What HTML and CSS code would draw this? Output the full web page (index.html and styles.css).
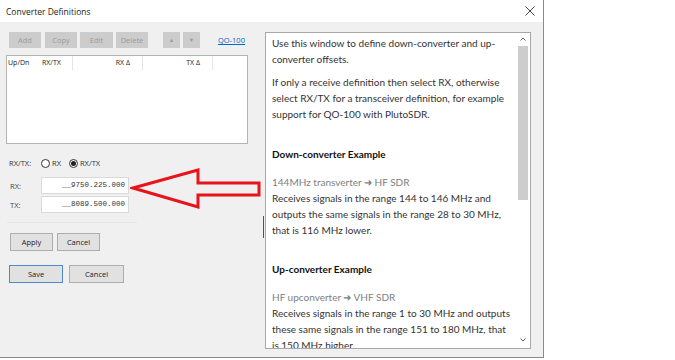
FILE: index.html
```html
<!DOCTYPE html>
<html>
<head>
    <meta charset="utf-8" />
    <title>Converter Definitions</title>
    <link rel="stylesheet" href="styles.css">
</head>
<body>
<div class="window">
    <div class="titlebar">
        <span class="title">Converter Definitions</span>
        <svg class="close" width="10" height="10" viewBox="0 0 10 10"><path d="M0.5 0.5L9.5 9.5M9.5 0.5L0.5 9.5" stroke="#444" stroke-width="1" fill="none"/></svg>
    </div>
    <div class="body">
        <div class="left">
            <div class="toolbar">
                <span class="btn dis w-add">Add</span>
                <span class="btn dis w-copy">Copy</span>
                <span class="btn dis w-edit">Edit</span>
                <span class="btn dis w-del">Delete</span>
                <span class="btn dis w-arr up">&#9650;</span>
                <span class="btn dis w-arr">&#9660;</span>
                <a class="link">QO-100</a>
            </div>
            <div class="list">
                <div class="list-head">
                    <span class="col c1">Up/Dn</span>
                    <span class="col c2">RX/TX</span>
                    <span class="col c3">RX &#916;</span>
                    <span class="col c4">TX &#916;</span>
                </div>
            </div>
            <div class="mode">
                <span class="mode-label">RX/TX:</span>
                <span class="radio"></span><span class="radio-text">RX</span>
                <span class="radio on"></span><span class="radio-text">RX/TX</span>
            </div>
            <div class="freq-row">
                <span class="freq-label">RX:</span>
                <span class="freq">__9750.225.000</span>
            </div>
            <div class="freq-row">
                <span class="freq-label">TX:</span>
                <span class="freq">__8089.500.000</span>
            </div>
            <div class="sep"></div>
            <div class="btn-row">
                <span class="btn w-apply">Apply</span>
                <span class="btn w-apply">Cancel</span>
            </div>
            <div class="btn-row last">
                <span class="btn w-save default">Save</span>
                <span class="btn w-cancel">Cancel</span>
            </div>
        </div>
        <div class="help">
            <div class="help-text">
                <p>Use this window to define down-converter and up-converter offsets.</p>
                <p>If only a receive definition then select RX, otherwise select RX/TX for a transceiver definition, for example support for QO-100 with PlutoSDR.</p>
                <h4>Down-converter Example</h4>
                <div class="sub">144MHz transverter &#10140; HF SDR</div>
                <div>Receives signals in the range 144 to 146 MHz and outputs the same signals in the range 28 to 30 MHz, that is 116 MHz lower.</div>
                <h4>Up-converter Example</h4>
                <div class="sub">HF upconverter &#10140; VHF SDR</div>
                <div>Receives signals in the range 1 to 30 MHz and outputs these same signals in the range 151 to 180 MHz, that is 150 MHz higher.</div>
            </div>
            <div class="scrollbar">
                <svg width="14" height="12" viewBox="0 0 14 12"><path d="M4.5 7.5L7 5L9.5 7.5" stroke="#606060" fill="none"/></svg>
                <div class="thumb"></div>
                <svg class="down" width="14" height="12" viewBox="0 0 14 12"><path d="M4.5 4.5L7 7L9.5 4.5" stroke="#606060" fill="none"/></svg>
            </div>
        </div>
    </div>
</div>
<svg class="arrow" width="140" height="50" viewBox="0 0 140 50">
    <polygon points="3,20 68,2 68,15 129,15 129,27 68,27 68,39" fill="none" stroke="#e8141c" stroke-width="3" stroke-linejoin="miter"/>
</svg>
<div class="redmark"></div>
</body>
</html>
```

FILE: styles.css
```css
body{
    margin: 0px;
    background: #fff;
    font-family: "Open Sans", "Liberation Sans", sans-serif;
}
.window{
    position: relative;
    width: 543px;
    height: 357px;
    background: #f0f0f0;
    border-right: 1px solid #8a8a8a;
    border-bottom: 1px solid #8a8a8a;
    display: flex;
    flex-direction: column;
}
.titlebar{
    flex-shrink: 0;
    height: 22px;
    background: #fff;
    display: flex;
    align-items: center;
    justify-content: space-between;
    padding: 0 8px 0 6px;
}
.title{
    font-size: 8.5px;
    color: #222;
}
.close{
    display: block;
}
.body{
    flex: 1;
    min-height: 0;
    display: flex;
    padding: 10px 12px 8px 0;
}
.left{
    width: 265px;
    flex-shrink: 0;
    display: flex;
    flex-direction: column;
}
.toolbar{
    display: flex;
    align-items: center;
    height: 16px;
    padding-left: 9px;
}
.btn{
    display: flex;
    align-items: center;
    justify-content: center;
    height: 16px;
    background: #e1e1e1;
    border: 1px solid #adadad;
    box-sizing: border-box;
    font-size: 7.5px;
    color: #222;
}
.btn.dis{
    background: #cccccc;
    border-color: #cccccc;
    color: #9a9a9a;
}
.w-add{ width: 32px; margin-right: 4px; }
.w-copy{ width: 32px; margin-right: 3px; }
.w-edit{ width: 33px; margin-right: 3px; }
.w-del{ width: 32px; margin-right: 15px; }
.w-arr{ width: 17px; font-size: 5.5px; margin-right: 3px; }
.link{
    margin-left: 15px;
    font-size: 7.5px;
    color: #0066cc;
    text-decoration: underline;
}
.list{
    margin: 7px 0 0 6px;
    width: 242px;
    height: 89px;
    flex-shrink: 0;
    background: #fff;
    border: 1px solid #b4b4b4;
    box-sizing: border-box;
}
.list-head{
    display: flex;
    height: 14px;
    align-items: center;
    font-size: 7px;
    color: #222;
}
.col{
    height: 14px;
    line-height: 14px;
    box-sizing: border-box;
}
.c1{ width: 35px; padding-left: 1px; }
.c2{ width: 31px; border-right: 1px solid #e5e5e5; }
.c3{ width: 70px; text-align: right; padding-right: 12px; border-right: 1px solid #e5e5e5; }
.c4{ width: 70px; text-align: right; padding-right: 12px; border-right: 1px solid #e5e5e5; }
.mode{
    display: flex;
    align-items: center;
    margin: 13px 0 0 9px;
    height: 12px;
    font-size: 7.5px;
    color: #333;
}
.mode-label{ width: 32px; }
.radio{
    width: 9px;
    height: 9px;
    border: 1px solid #333;
    border-radius: 50%;
    box-sizing: border-box;
    background: #fff;
    display: flex;
    align-items: center;
    justify-content: center;
}
.radio.on::after{
    content: "";
    width: 5px;
    height: 5px;
    border-radius: 50%;
    background: #222;
}
.radio-text{ margin: 0 8px 0 2px; }
.freq-row{
    display: flex;
    align-items: center;
    margin: 8px 0 0 10px;
    height: 17px;
}
.freq-row + .freq-row{ margin-top: 2px; }
.freq-label{
    width: 31px;
    font-size: 7.5px;
    color: #444;
}
.freq{
    width: 88px;
    height: 17px;
    background: #fff;
    border: 1px solid #d9d9d9;
    box-sizing: border-box;
    font-family: "Liberation Mono", monospace;
    font-size: 7.5px;
    color: #333;
    text-align: right;
    padding-right: 3px;
    line-height: 15px;
}
.sep{
    margin: 9px 0 0 7px;
    width: 130px;
    height: 1px;
    background: #e6e6e6;
}
.btn-row{
    display: flex;
    margin: 10px 0 0 10px;
    gap: 4px;
}
.btn-row .btn{ height: 18px; }
.btn-row.last{
    margin: 14px 0 0 9px;
    gap: 6px;
}
.w-apply{ width: 43px; }
.w-save{ width: 54px; }
.w-cancel{ width: 55px; }
.btn.default{
    border: 1px solid #4a8ad0;
}
.help{
    flex: 1;
    min-height: 0;
    display: flex;
    background: #fff;
    border: 1px solid #a8a8a8;
    overflow: hidden;
}
.help-text{
    flex: 1;
    padding: 2px 3px 0 6px;
    font-family: "Lato", "Liberation Sans", sans-serif;
    font-size: 10px;
    line-height: 16px;
    color: #333;
}
.help-text p{
    margin: 0 0 7px 0;
}
.help-text h4{
    margin: 24px 0 12px 0;
    font-size: 10px;
    font-weight: bold;
    color: #111;
}
.help-text h4 + .sub + div + h4{
    margin-top: 23px;
}
.help-text .sub{
    color: #808080;
}
.scrollbar{
    width: 14px;
    flex-shrink: 0;
    display: flex;
    flex-direction: column;
    align-items: center;
    background: #fff;
}
.thumb{
    width: 10px;
    height: 154px;
    margin-top: 1px;
    background: #cdcdcd;
}
.scrollbar .down{
    margin-top: auto;
    margin-bottom: 2px;
}
.arrow{
    position: absolute;
    left: 130px;
    top: 168px;
}
.redmark{
    position: absolute;
    left: 263px;
    top: 216px;
    width: 1px;
    height: 22px;
    background: #e8141c;
}
```
